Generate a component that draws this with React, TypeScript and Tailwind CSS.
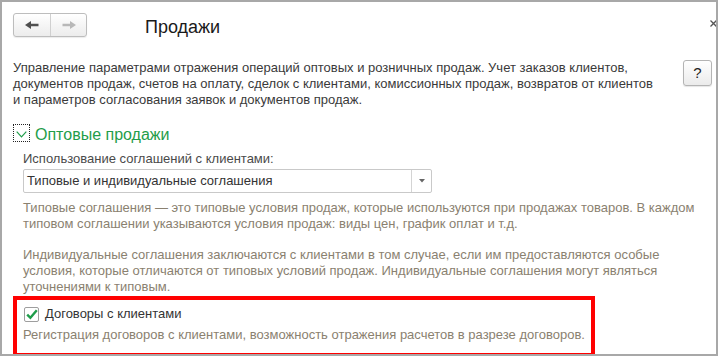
export default function App() {
  return (
    <div className="relative w-[718px] h-[356px] overflow-hidden border-2 border-[#a8a8a8] bg-white font-['Liberation_Sans',Arial,sans-serif] text-[13px] leading-[16px] text-[#3a3a3a]">
      {/* close cross */}
      <svg className="absolute right-[-1px] top-[18px]" width="7" height="7" viewBox="0 0 7 7">
        <path d="M0.5 0.5 L6.5 6.5 M6.5 0.5 L0.5 6.5" stroke="#555" strokeWidth="1.3" />
      </svg>

      {/* header */}
      <div className="flex items-start pl-[11px] pt-[11px]">
        <div className="flex h-[24px] w-[74px] rounded-[3px] border border-[#bdbdbd] bg-gradient-to-b from-white to-[#ececec] shadow-[0_1px_1px_rgba(0,0,0,0.08)]">
          <div className="flex w-[37px] items-center justify-center border-r border-[#d0d0d0]">
            <svg width="14" height="8" viewBox="0 0 14 8">
              <path d="M0 4 L6 0 V2.7 H13.5 V5.3 H6 V8 Z" fill="#4f4f4f" />
            </svg>
          </div>
          <div className="flex flex-1 items-center justify-center">
            <svg width="14" height="8" viewBox="0 0 14 8">
              <path d="M14 4 L8 0 V2.7 H0.5 V5.3 H8 V8 Z" fill="#b8b8b8" />
            </svg>
          </div>
        </div>
        <div className="ml-[58px] mt-[3px] text-[18px] leading-[22px] text-[#1a1a1a]">Продажи</div>
      </div>

      {/* intro */}
      <div className="mt-[22px] flex items-start pl-[11px] pr-[4px]">
        <p className="w-[650px]">
          Управление параметрами отражения операций оптовых и розничных продаж. Учет заказов клиентов, документов продаж, счетов на оплату, сделок с клиентами, комиссионных продаж, возвратов от клиентов и параметров согласования заявок и документов продаж.
        </p>
        <button className="ml-auto flex h-[26px] w-[29px] items-center justify-center rounded-[3px] border border-[#b4b4b4] bg-gradient-to-b from-white to-[#ebebeb] text-[15px] text-[#222] shadow-[0_1px_1px_rgba(0,0,0,0.1)]">
          ?
        </button>
      </div>

      {/* section */}
      <div className="pl-[11px]">
        <div className="mt-[16px] flex items-start">
          <div className="flex h-[18px] w-[17px] items-center justify-center border border-dotted border-[#222] pt-[2px]">
            <svg width="11" height="7" viewBox="0 0 11 7">
              <path d="M0.7 0.7 L5.5 5.8 L10.3 0.7" fill="none" stroke="#1f9d4a" strokeWidth="1.2" />
            </svg>
          </div>
          <div className="ml-[5px] mt-[2px] text-[16px] leading-[18px] text-[#1f9d4a]">Оптовые продажи</div>
        </div>

        <div className="pl-[10px]">
          <div className="mt-[7px] text-[#4a4a4a]">Использование соглашений с клиентами:</div>
          <div className="mt-[2px] flex h-[24px] w-[409px] rounded-[2px] border border-[#c9c9c9] bg-white">
            <div className="flex flex-1 items-center pl-[3px] text-[#333]">Типовые и индивидуальные соглашения</div>
            <div className="flex w-[20px] items-center justify-center border-l border-[#d4d4d4]">
              <svg width="6" height="4" viewBox="0 0 6 4">
                <path d="M0 0 H6 L3 3.5 Z" fill="#666" />
              </svg>
            </div>
          </div>

          <div className="w-[682px] text-[#8a8170]">
            <p className="mt-[6.5px]">
              Типовые соглашения — это типовые условия продаж, которые используются при продажах товаров. В каждом типовом соглашении указываются условия продаж: виды цен, график оплат и т.д.
            </p>
            <p className="mt-[15.5px]">
              Индивидуальные соглашения заключаются с клиентами в том случае, если им предоставляются особые условия, которые отличаются от типовых условий продаж. Индивидуальные соглашения могут являться уточнениями к типовым.
            </p>
          </div>
        </div>

        {/* highlighted option */}
        <div className="mt-[1px] h-[61px] w-[582px] border-4 border-[#ff0000] pl-[6px] pt-[6px]">
          <div className="flex items-center">
            <div className="ml-[1px] flex h-[15px] w-[15px] items-center justify-center rounded-[2px] border border-[#9e9e9e] bg-white">
              <svg width="12" height="11" viewBox="0 0 12 11">
                <path d="M1.2 5.6 L4.4 8.8 L10.8 1.2" fill="none" stroke="#1f9d4a" strokeWidth="2.4" />
              </svg>
            </div>
            <span className="ml-[6px] text-[#333]">Договоры с клиентами</span>
          </div>
          <p className="mt-[4.5px] text-[#8a8170]">
            Регистрация договоров с клиентами, возможность отражения расчетов в разрезе договоров.
          </p>
        </div>
      </div>
    </div>
  );
}
